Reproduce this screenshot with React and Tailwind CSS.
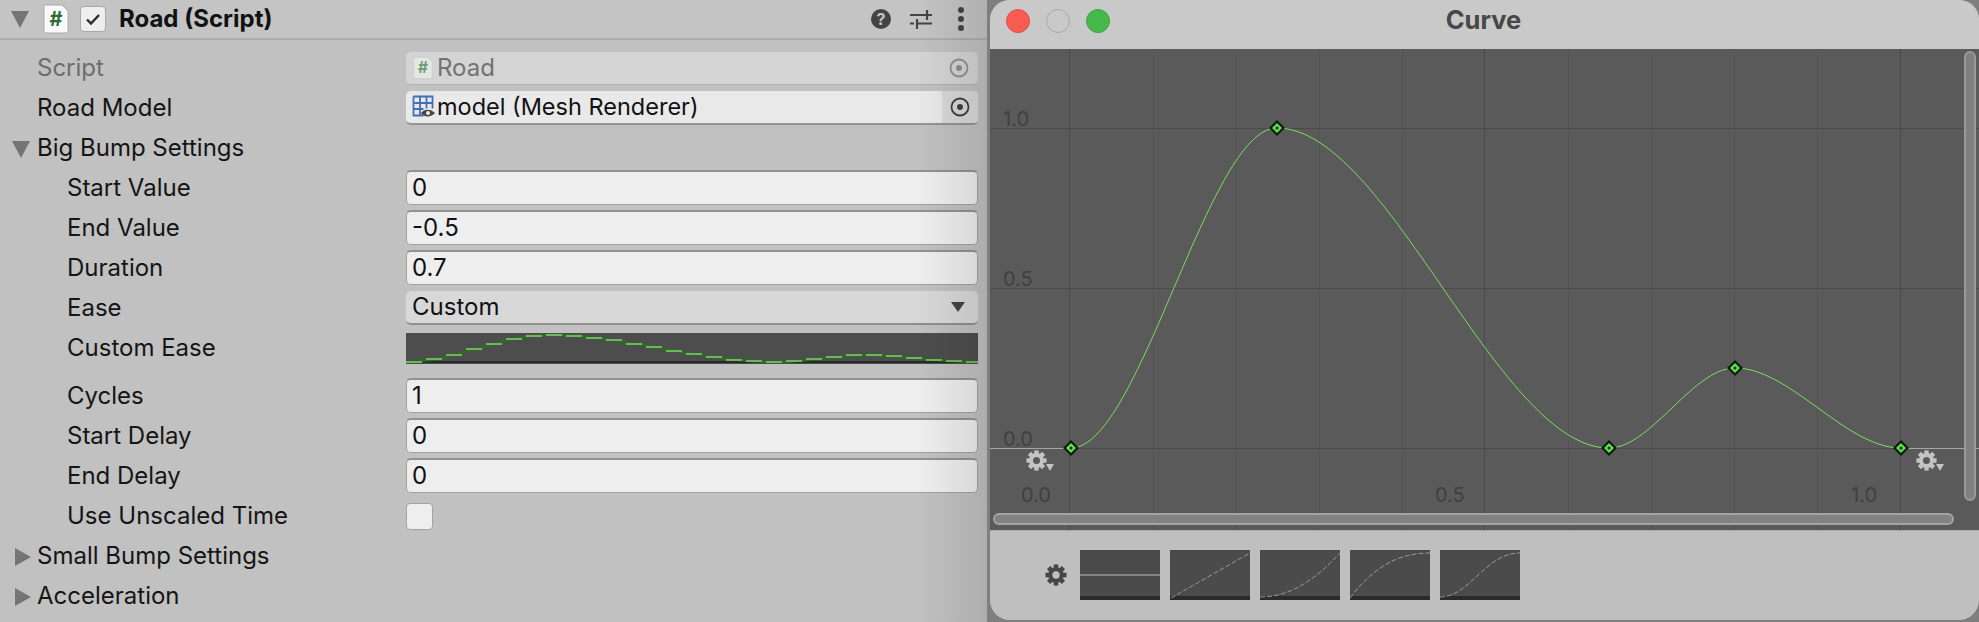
import React from 'react';

const keys = [
  [0, 0],
  [0.248, 1],
  [0.648, 0],
  [0.8, 0.25],
  [1, 0],
];

// hermite with flat tangents between the keys
function curveAt(t) {
  for (let i = 0; i < keys.length - 1; i++) {
    const [x0, y0] = keys[i];
    const [x1, y1] = keys[i + 1];
    if (t <= x1) {
      const s = (t - x0) / (x1 - x0);
      return y0 + (y1 - y0) * s * s * (3 - 2 * s);
    }
  }
  return 0;
}

function mainCurve() {
  let d = '';
  for (let x = 1071; x <= 1901; x += 3) {
    const y = 448 - curveAt((x - 1071) / 830) * 320;
    d += (d ? 'L' : 'M') + x + ' ' + y.toFixed(1);
  }
  return d;
}

function thumbLine() {
  let d = '';
  for (let x = 0; x <= 572; x += 6) {
    const y = 29 - curveAt(x / 572) * 27;
    d += (d ? 'L' : 'M') + x + ' ' + y.toFixed(1);
  }
  return d;
}

// short flat dashes, the stair look of the little preview
function thumbDashes() {
  let d = '';
  for (let x = 0; x <= 572; x += 20) {
    const y = Math.round(29 - curveAt((x + 8) / 572) * 27);
    d += 'M' + x + ' ' + y + 'H' + (x + 16);
  }
  return d;
}

function Triangle({ open, className }) {
  return (
    <svg width="20" height="20" viewBox="0 0 20 20" className={className}>
      {open ? <path d="M1 2h18L10 19z" fill="#757575" /> : <path d="M2 1l16 9L2 19z" fill="#757575" />}
    </svg>
  );
}

function ScriptIcon({ faded }) {
  return (
    <svg width={faded ? 20 : 26} height={faded ? 24 : 30} viewBox="0 0 26 30" className="shrink-0">
      <path d="M2 1h17l6 6v21a1 1 0 0 1-1 1H2a1 1 0 0 1-1-1V2a1 1 0 0 1 1-1z" fill={faded ? '#e4e8e4' : '#fafafa'} stroke={faded ? '#c8c8c8' : '#aaa'} />
      <text x="13" y="22" textAnchor="middle" fontSize="20" fontWeight="700" fontFamily="Inter" fill={faded ? '#6f9a72' : '#2f6b38'}>#</text>
    </svg>
  );
}

function MeshIcon() {
  return (
    <svg width="24" height="24" viewBox="0 0 24 24" className="shrink-0">
      <path d="M1.500 1.500h19v12M1.500 1.500v19h10M1.500 8h19M1.500 14h10M8 1.500v19M14.500 1.500v12" fill="none" stroke="#3f6fb5" strokeWidth="1.800" />
      <path d="M9 18c3-4.500 10-4.500 14 0-4 4.500-11 4.500-14 0z" fill="#444" />
      <circle cx="16" cy="18" r="2" fill="#eee" />
    </svg>
  );
}

function Picker({ color }) {
  return (
    <svg width="20" height="20" viewBox="0 0 20 20" className="shrink-0">
      <circle cx="10" cy="10" r="8.500" fill="none" stroke={color} strokeWidth="1.800" />
      <circle cx="10" cy="10" r="3" fill={color} />
    </svg>
  );
}

function Gear({ size, color, hole }) {
  const teeth = [0, 45, 90, 135];
  return (
    <svg width={size} height={size} viewBox="0 0 24 24" className="shrink-0">
      {teeth.map((a) => (
        <rect key={a} x="9.500" y="0.500" width="5" height="23" fill={color} transform={`rotate(${a} 12 12)`} />
      ))}
      <circle cx="12" cy="12" r="8.500" fill={color} />
      <circle cx="12" cy="12" r="4" fill={hole} />
    </svg>
  );
}

function Foldout({ label, open }) {
  return (
    <div className="h-10 flex items-center relative pl-[37px] text-[#151515]">
      <Triangle open={open} className={`absolute top-[11px] ${open ? 'left-[11px]' : 'left-[13px]'}`} />
      {label}
    </div>
  );
}

function Field({ label, value }) {
  return (
    <div className="h-10 flex items-center pr-[9px]">
      <span className="w-[339px] ml-[67px] shrink-0 text-[#151515]">{label}</span>
      <div className="h-[35px] -mt-px flex-1 flex items-center pl-[5px] pb-px rounded-[5px] bg-[#eeeeee] border border-[#a3a3a3] border-t-2 border-t-[#929292] text-[#111]">
        {value}
      </div>
    </div>
  );
}

function Preset({ d, flat }) {
  return (
    <div className="w-20 h-[50px] bg-[#4b4b4b] relative">
      <div className="absolute left-0 right-0 bottom-0 h-1 bg-[#2b2b2b]" />
      <svg width="80" height="50" viewBox="0 0 80 50" className="absolute inset-0">
        <path d={d} fill="none" stroke="#989898" strokeWidth={flat ? 1.500 : 1} strokeDasharray={flat ? undefined : '5 2'} />
      </svg>
    </div>
  );
}

const presets = [
  { d: 'M0 25H80', flat: true },
  { d: 'M1 48L80 3' },
  { d: 'M0 47C30 47 55 30 80 3' },
  { d: 'M0 48C25 15 50 3 80 3' },
  { d: 'M0 47C30 47 45 3 80 3' },
];

const minorX = [1153, 1236, 1319, 1402, 1568, 1651, 1734, 1817];

function CurveChart() {
  const points = [
    [1071, 448],
    [1277, 128],
    [1609, 448],
    [1735, 368],
    [1901, 448],
  ];
  return (
    <svg viewBox="990 49 989 481" className="absolute inset-0 w-full h-full">
      {minorX.map((x) => (
        <path key={x} d={`M${x + 0.5} 49V530`} stroke="#555555" strokeWidth="1" />
      ))}
      {[1069, 1484, 1900].map((x) => (
        <path key={x} d={`M${x + 0.5} 49V530`} stroke="#4a4a4a" strokeWidth="1" />
      ))}
      {[128, 288, 448].map((y) => (
        <path key={y} d={`M990 ${y + 0.5}H1979`} stroke="#4a4a4a" strokeWidth="1" />
      ))}
      <path d="M990 448.500H1071M1901 448.500H1979" stroke="#a6a6a6" strokeWidth="1" />
      <path d={mainCurve()} fill="none" stroke="#7bdc64" strokeWidth="1" />
      {points.map(([x, y]) => (
        <g key={x} transform={`translate(${x} ${y})`}>
          <path d="M0-8L8 0 0 8-8 0z" fill="#0d1a0d" />
          <path d="M0-5L5 0 0 5-5 0z" fill="#5fe04f" />
          <circle r="1.500" fill="#123312" />
        </g>
      ))}
      <g fontFamily="Inter" fontSize="20" fill="#404040">
        <text x="1003" y="126">1.0</text>
        <text x="1003" y="286">0.5</text>
        <text x="1003" y="446">0.0</text>
        <text x="1021" y="502">0.0</text>
        <text x="1435" y="502">0.5</text>
        <text x="1851" y="502">1.0</text>
      </g>
    </svg>
  );
}

function ChartGear({ className }) {
  return (
    <div className={`absolute top-[401px] flex items-end ${className}`}>
      <Gear size={21} color="#c4c4c4" hole="#595959" />
      <svg width="8" height="8" viewBox="0 0 8 8" className="-ml-px">
        <path d="M0 1h8L4 8z" fill="#c4c4c4" />
      </svg>
    </div>
  );
}

export default function App() {
  return (
    <div className="w-[1979px] h-[622px] overflow-hidden flex items-start bg-[#7f7f7f] text-[24px] leading-none font-['Inter',sans-serif]">
      {/* inspector */}
      <div className="w-[987px] h-[622px] shrink-0 bg-[#c1c1c1] relative">
        <div className="h-10 flex items-center border-b-2 border-[#aeaeae] bg-[#c4c4c4]">
          <Triangle open className="ml-[10px] mr-[13px] shrink-0" />
          <ScriptIcon />
          <div className="w-[26px] h-[26px] ml-[11px] mr-[13px] rounded-[4px] bg-[#eeeeee] border border-[#a8a8a8] flex items-center justify-center">
            <svg width="18" height="18" viewBox="0 0 18 18">
              <path d="M3 9.500l4 4 8-8.500" fill="none" stroke="#2b2b2b" strokeWidth="2.400" />
            </svg>
          </div>
          <span className="font-bold text-[#111]">Road (Script)</span>
          <div className="ml-auto mr-[22px] flex items-center">
            <div className="w-5 h-5 rounded-full bg-[#444] text-[#c4c4c4] text-[16px] font-bold flex items-center justify-center">?</div>
            <svg width="22" height="22" viewBox="0 0 22 22" className="ml-[19px] mr-[25px]">
              <path d="M0 7h22M17 2v10M0 15.500h4M8 15.500h14M7 11v10" stroke="#444" strokeWidth="2.200" fill="none" />
            </svg>
            <svg width="8" height="24" viewBox="0 0 8 24">
              <circle cx="4" cy="3" r="3" fill="#444" />
              <circle cx="4" cy="12" r="3" fill="#444" />
              <circle cx="4" cy="21" r="3" fill="#444" />
            </svg>
          </div>
        </div>
        <div className="pt-[8px]">
          <div className="h-10 flex items-center pr-[9px]">
            <span className="w-[406px] pl-[37px] shrink-0 text-[#6d6d6d]">Script</span>
            <div className="h-[33px] flex-1 flex items-center gap-[4px] pl-[7px] pr-[9px] rounded-[5px] bg-[#d4d4d4] border-b border-[#b2b2b2] text-[#727272]">
              <ScriptIcon faded />
              Road
              <span className="ml-auto"><Picker color="#8f8f8f" /></span>
            </div>
          </div>
          <div className="h-10 flex items-center pr-[9px]">
            <span className="w-[406px] pl-[37px] shrink-0 text-[#151515]">Road Model</span>
            <div className="h-[34px] flex-1 flex items-center gap-[1px] pl-[6px] rounded-[5px] bg-[#e9e9e9] border-b-2 border-[#949494] text-[#111] text-[23.500px] overflow-hidden">
              <MeshIcon />
              model (Mesh Renderer)
              <span className="ml-auto w-[36px] h-full bg-[#d8d8d8] flex items-center justify-center"><Picker color="#3f3f3f" /></span>
            </div>
          </div>
          <Foldout label="Big Bump Settings" open />
          <Field label="Start Value" value="0" />
          <Field label="End Value" value="-0.5" />
          <Field label="Duration" value="0.7" />
          <div className="h-10 flex items-center pr-[9px]">
            <span className="w-[339px] ml-[67px] shrink-0 text-[#151515]">Ease</span>
            <div className="h-[34px] flex-1 flex items-center justify-between pl-[6px] pr-[12px] rounded-[5px] bg-[#d8d8d8] border-b-2 border-[#8f8f8f] text-[#111]">
              Custom
              <svg width="16" height="12" viewBox="0 0 16 12">
                <path d="M1 1h14L8 11z" fill="#444" />
              </svg>
            </div>
          </div>
          <div className="h-10 mb-2 flex items-center pr-[9px]">
            <span className="w-[339px] ml-[67px] shrink-0 text-[#151515]">Custom Ease</span>
            <div className="h-[31px] flex-1 bg-[#4d4d4d] relative overflow-hidden">
              <div className="absolute left-0 right-0 bottom-[1px] h-[2px] bg-[#2a2a2a]" />
              <svg viewBox="0 0 572 31" className="absolute inset-0 w-full h-full">
                <path d={thumbLine()} fill="none" stroke="#2b6f20" strokeWidth="2.500" />
                <path d={thumbDashes()} fill="none" stroke="#6fb55f" strokeWidth="1.500" shapeRendering="crispEdges" />
              </svg>
            </div>
          </div>
          <Field label="Cycles" value="1" />
          <Field label="Start Delay" value="0" />
          <Field label="End Delay" value="0" />
          <div className="h-10 flex items-center">
            <span className="w-[339px] ml-[67px] shrink-0 text-[#151515]">Use Unscaled Time</span>
            <div className="w-[27px] h-[27px] rounded-[4px] bg-[#eeeeee] border border-[#a3a3a3]" />
          </div>
          <Foldout label="Small Bump Settings" />
          <Foldout label="Acceleration" />
        </div>
        {/* window shadow falling on the inspector */}
        <div className="absolute top-0 bottom-0 right-0 w-[70px] pointer-events-none bg-gradient-to-r from-transparent to-black/10" />
      </div>

      {/* curve window */}
      <div className="ml-[3px] w-[989px] h-[620px] flex flex-col rounded-[20px] overflow-hidden bg-[#bfbfbf]">
        <div className="h-[49px] shrink-0 bg-[#c9c9c9] flex items-center pl-[16px] pb-[8px] gap-[16px]">
          <div className="w-6 h-6 rounded-full bg-[#f95c51] border border-[#de4b41]" />
          <div className="w-6 h-6 rounded-full bg-[#c9c9c9] border border-[#a8a8a8]" />
          <div className="w-6 h-6 rounded-full bg-[#45b949] border border-[#3ba33f]" />
          <span className="flex-1 text-center font-bold text-[#474747] text-[25.500px] pr-[138px] -mt-px">Curve</span>
        </div>
        <div className="h-[481px] shrink-0 bg-[#5a5a5a] relative">
          <CurveChart />
          <ChartGear className="left-[36px]" />
          <ChartGear className="left-[926px]" />
          <div className="absolute left-[974px] top-[2px] w-3 h-[450px] rounded-full bg-[#808080] border-2 border-[#9a9a9a]" />
          <div className="absolute left-[3px] top-[464px] w-[961px] h-3 rounded-full bg-[#828282] border-2 border-[#a4a4a4]" />
        </div>
        <div className="flex-1 flex items-center pl-[55px] pb-[2px] gap-[10px] border-t border-[#a8a8a8]">
          <span className="mr-[3px]"><Gear size={22} color="#474747" hole="#bfbfbf" /></span>
          {presets.map((p) => (
            <Preset key={p.d} d={p.d} flat={p.flat} />
          ))}
        </div>
      </div>
    </div>
  );
}
